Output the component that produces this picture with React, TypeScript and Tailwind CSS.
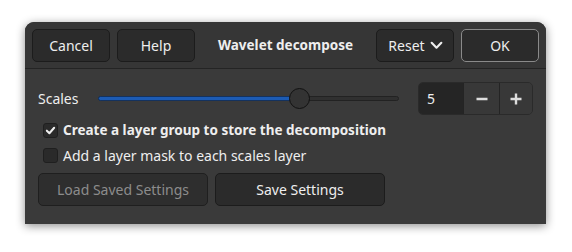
import React from 'react';

const font = { fontFamily: '"Noto Sans", "DejaVu Sans", sans-serif' };

function Btn({ children, className = '' }: { children: React.ReactNode; className?: string }) {
  return (
    <button
      className={`h-[33px] rounded-[5px] border border-[#1c1c1c] bg-[#2b2b2b] text-[14px] text-[#eeeeee] flex items-center justify-center ${className}`}
    >
      {children}
    </button>
  );
}

function Check({ checked }: { checked: boolean }) {
  return (
    <span className="w-[15px] h-[15px] rounded-[3px] border border-[#1f1f1f] bg-[#2a2a2a] flex items-center justify-center">
      {checked && (
        <svg width="11" height="11" viewBox="0 0 12 12">
          <path d="M2 6.2 L4.8 9 L10 3" fill="none" stroke="#eeeeee" strokeWidth="2.2" strokeLinecap="round" strokeLinejoin="round" />
        </svg>
      )}
    </span>
  );
}

export default function App() {
  return (
    <div className="w-[572px] h-[252px] bg-white pl-[25px] pt-[22px]" style={font}>
      <div className="w-[521px] h-[202px] bg-[#3a3a3a] rounded-t-[9px] shadow-[0_2px_10px_rgba(0,0,0,0.45)] flex flex-col">
        {/* Header */}
        <div className="h-[47px] border-b border-[#242424] bg-[#363636] rounded-t-[9px] flex items-center px-[7px]">
          <div className="flex gap-[7px]">
            <Btn className="w-[78px]">Cancel</Btn>
            <Btn className="w-[78px]">Help</Btn>
          </div>
          <div className="flex-1 text-center font-bold text-[13.5px] text-[#eeeeee]">Wavelet decompose</div>
          <div className="flex gap-[7px]">
            <Btn className="w-[78px] gap-[4px] pl-[2px]">
              Reset
              <svg width="15" height="15" viewBox="0 0 14 14">
                <path d="M2.5 4.5 L7 9 L11.5 4.5" fill="none" stroke="#eeeeee" strokeWidth="2" strokeLinecap="round" strokeLinejoin="round" />
              </svg>
            </Btn>
            <button className="w-[78px] h-[33px] rounded-[5px] border border-[#8a8a8a] bg-[#2b2b2b] text-[14px] text-[#eeeeee]">
              OK
            </button>
          </div>
        </div>

        {/* Body */}
        <div className="flex flex-col px-[13px] pt-[13px]">
          <div className="flex items-center h-[33px]">
            <span className="text-[14px] text-[#eeeeee] w-[60px]">Scales</span>
            <div className="relative w-[301px] h-[20px] flex items-center">
              <div className="w-full h-[5px] rounded-full bg-[#303030] border border-[#222222]" />
              <div className="absolute left-0 w-[195px] h-[5px] rounded-full bg-[#1c5bb4] border border-[#14325e]" />
              <div className="absolute left-[191px] w-[21px] h-[21px] rounded-full bg-[#333333] border border-[#111111]" />
            </div>
            <div className="ml-auto flex h-[33px] w-[115px] rounded-[5px] border border-[#2a2a2a] overflow-hidden">
              <div className="w-[44px] bg-[#252525] text-[14px] text-[#eeeeee] flex items-center pl-[8px]">5</div>
              <div className="w-[36px] bg-[#383838] border-l border-[#242424] flex items-center justify-center">
                <svg width="14" height="14" viewBox="0 0 14 14">
                  <path d="M1.5 7 H12.5" stroke="#dddddd" strokeWidth="2.4" />
                </svg>
              </div>
              <div className="flex-1 bg-[#383838] border-l border-[#242424] flex items-center justify-center">
                <svg width="14" height="14" viewBox="0 0 14 14">
                  <path d="M1.5 7 H12.5 M7 1.5 V12.5" stroke="#dddddd" strokeWidth="2.4" />
                </svg>
              </div>
            </div>
          </div>

          <label className="flex items-center gap-[5px] pl-[5px] mt-[4px] h-[22px]">
            <Check checked />
            <span className="text-[13.5px] font-bold text-[#eeeeee]">Create a layer group to store the decomposition</span>
          </label>
          <label className="flex items-center gap-[5px] pl-[5px] mt-[3px] h-[22px]">
            <Check checked={false} />
            <span className="text-[14px] text-[#eeeeee]">Add a layer mask to each scales layer</span>
          </label>

          <div className="flex gap-[7px] mt-[7px]">
            <button className="w-[170px] h-[33px] rounded-[5px] border border-[#1f1f1f] bg-[#2e2e2e] text-[14px] text-[#8c8c8c]">
              Load Saved Settings
            </button>
            <Btn className="w-[170px]">Save Settings</Btn>
          </div>
        </div>
      </div>
    </div>
  );
}
